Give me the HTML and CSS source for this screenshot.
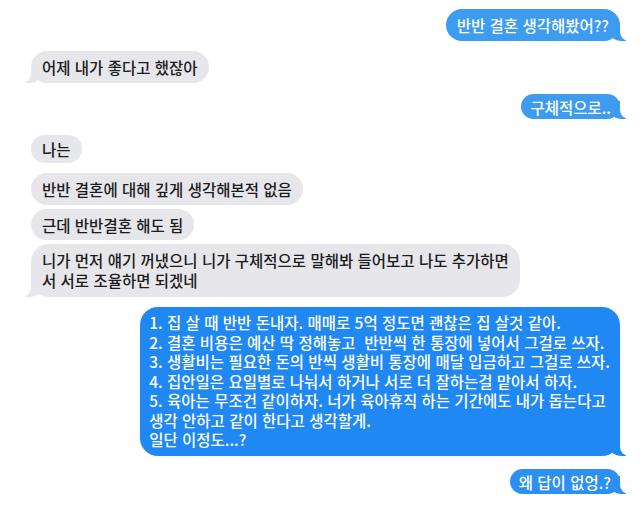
FILE: index.html
```html
<!DOCTYPE html>
<html lang="ko">
<head>
<meta charset="utf-8">
<title>반반 결혼</title>
<link rel="stylesheet" href="styles.css">
</head>
<body>
<div class="chat">
  <div class="row me first"><div class="bubble blue tail">반반 결혼 생각해봤어??</div></div>
  <div class="row them gap10"><div class="bubble gray tail">어제 내가 좋다고 했잖아</div></div>
  <div class="row me gap11"><div class="bubble blue tail slim">구체적으로..</div></div>
  <div class="row them gap16"><div class="bubble gray short">나는</div></div>
  <div class="row them gap10"><div class="bubble gray">반반 결혼에 대해 깊게 생각해본적 없음</div></div>
  <div class="row them gap4"><div class="bubble gray tight">근데 반반결혼 해도 됨</div></div>
  <div class="row them gap4"><div class="bubble gray tail multi">니가 먼저 얘기 꺼냈으니 니가 구체적으로 말해봐 들어보고 나도 추가하면<br>서 서로 조율하면 되겠네</div></div>
  <div class="row me gap10"><div class="bubble blue deep tail multi big">1. 집 살 때 반반 돈내자. 매매로 5억 정도면 괜찮은 집 살것 같아.<br>2. 결혼 비용은 예산 딱 정해놓고&nbsp; 반반씩 한 통장에 넣어서 그걸로 쓰자.<br>3. 생활비는 필요한 돈의 반씩 생활비 통장에 매달 입금하고 그걸로 쓰자.<br>4. 집안일은 요일별로 나눠서 하거나 서로 더 잘하는걸 맡아서 하자.<br>5. 육아는 무조건 같이하자. 너가 육아휴직 하는 기간에도 내가 돕는다고<br>생각 안하고 같이 한다고 생각할게.<br>일단 이정도...?</div></div>
  <div class="row me gap13"><div class="bubble blue mid tail slim">왜 답이 없엉.?</div></div>
</div>
</body>
</html>
```

FILE: styles.css
```css
* { box-sizing: border-box; }
html, body {
  margin: 0;
  padding: 0;
  background: #ffffff;
}
body {
  width: 640px;
  height: 510px;
  overflow: hidden;
  font-family: "Noto Sans CJK KR", "Noto Sans", sans-serif;
  font-size: 15.5px;
  font-weight: 500;
}
.chat {
  display: flex;
  flex-direction: column;
  padding: 9px 20px 0 31px;
}
.row { display: flex; }
.row.me { justify-content: flex-end; }
.row.them { justify-content: flex-start; }
.gap4 { margin-top: 4px; }
.gap10 { margin-top: 10px; }
.gap11 { margin-top: 11px; }
.gap13 { margin-top: 13px; }
.gap16 { margin-top: 16px; }

.bubble {
  position: relative;
  z-index: 0;
  padding: 6px 11px;
  line-height: 20px;
  border-radius: 16px;
  white-space: nowrap;
}
.bubble.gray {
  background: #e6e6eb;
  color: #1c1c1c;
}
.bubble.blue {
  background: #3d9bf0;
  color: #ffffff;
}
.bubble.blue.deep { background: #1f88f3; }
.bubble.blue.mid { background: #2c8ff2; }
.bubble.slim { padding: 2.5px 9px; }
.bubble.short { padding: 4px 11px; border-radius: 14px; }
.bubble.tight { padding: 5.5px 11px; }
.bubble.multi {
  line-height: 19.5px;
  padding: 7px 11px;
  border-radius: 18px;
}
.bubble.big {
  padding: 6px 10px 6.5px 9px;
}

/* tails */
.bubble.tail::before,
.bubble.tail::after {
  content: "";
  position: absolute;
  z-index: -1;
  bottom: 0;
  height: 18px;
}
.row.me .bubble.tail::before {
  right: -6px;
  width: 18px;
  background: inherit;
  border-bottom-left-radius: 14px 12px;
}
.row.me .bubble.tail::after {
  right: -24px;
  width: 24px;
  background: #ffffff;
  border-bottom-left-radius: 9px;
}
.row.them .bubble.tail::before {
  left: -6px;
  width: 18px;
  background: inherit;
  border-bottom-right-radius: 14px 12px;
}
.row.them .bubble.tail::after {
  left: -24px;
  width: 24px;
  background: #ffffff;
  border-bottom-right-radius: 9px;
}
```
